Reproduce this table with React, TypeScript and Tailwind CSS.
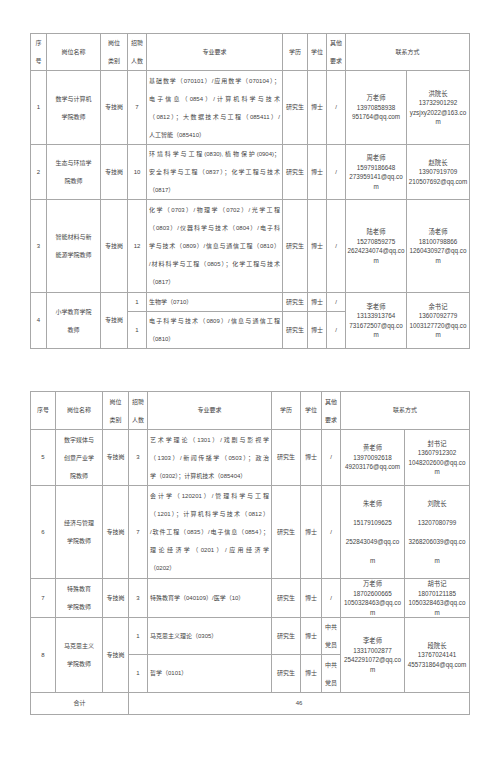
import React from 'react'

const cell = 'border border-[#a8a8a8] p-0 text-center align-middle'
const major = 'border border-[#a8a8a8] px-[2px] py-0 text-left align-middle'

// 多行文本：full 为需要两端对齐的行
function Lines({ lines, full = 0 }: { lines: string[]; full?: number }) {
  return (
    <div className="leading-[18px]">
      {lines.map((l, i) => (
        <div key={i} className={i < full ? 'whitespace-nowrap text-justify [text-align-last:justify]' : 'whitespace-nowrap'}>
          {l}
        </div>
      ))}
    </div>
  )
}

function Contact({ lines, wide }: { lines: string[]; wide?: boolean }) {
  return (
    <div className={wide ? 'leading-[19px] text-[6.3px]' : 'leading-[9.5px] text-[6.3px]'}>
      {lines.map((l, i) => (
        <div key={i} className="whitespace-nowrap">{l}</div>
      ))}
    </div>
  )
}

function Head({ first }: { first: 'two' | 'one' }) {
  return (
    <tr className={first === 'two' ? 'h-[37px]' : 'h-[38px]'}>
      <td className={cell}>{first === 'two' ? <Lines lines={['序', '号']} /> : '序号'}</td>
      <td className={cell}>岗位名称</td>
      <td className={cell}><Lines lines={['岗位', '类别']} /></td>
      <td className={cell}><Lines lines={['招聘', '人数']} /></td>
      <td className={cell}>专业要求</td>
      <td className={cell}>学历</td>
      <td className={cell}>学位</td>
      <td className={cell}><Lines lines={['其他', '要求']} /></td>
      <td className={cell} colSpan={2}>联系方式</td>
    </tr>
  )
}

export default function App() {
  return (
    <div className="min-h-[761px] w-[500px] bg-white pl-[30px] pt-[33px] font-['Liberation_Sans','Noto_Sans_CJK_SC',sans-serif] text-[6px] text-[#444]">
      {/* 第一页 */}
      <table className="w-[439px] table-fixed border-collapse">
        <colgroup>
          <col className="w-[16px]" />
          <col className="w-[54px]" />
          <col className="w-[27px]" />
          <col className="w-[19px]" />
          <col className="w-[136px]" />
          <col className="w-[25px]" />
          <col className="w-[19px]" />
          <col className="w-[19px]" />
          <col className="w-[61px]" />
          <col className="w-[63px]" />
        </colgroup>
        <tbody>
          <Head first="two" />
          <tr className="h-[74px]">
            <td className={cell}>1</td>
            <td className={cell}><Lines lines={['数学与计算机', '学院教师']} /></td>
            <td className={cell}>专技岗</td>
            <td className={cell}>7</td>
            <td className={major}>
              <Lines
                full={3}
                lines={['基础数学（070101）/应用数学（070104）；', '电子信息（0854）/计算机科学与技术', '（0812）；大数据技术与工程（085411）/', '人工智能（085410）']}
              />
            </td>
            <td className={cell}>研究生</td>
            <td className={cell}>博士</td>
            <td className={cell}>/</td>
            <td className={cell}><Contact lines={['万老师', '13970858938', '951764@qq.com']} /></td>
            <td className={cell}><Contact lines={['洪院长', '13732901292', 'yzsjxy2022@163.co', 'm']} /></td>
          </tr>
          <tr className="h-[55px]">
            <td className={cell}>2</td>
            <td className={cell}><Lines lines={['生态与环境学', '院教师']} /></td>
            <td className={cell}>专技岗</td>
            <td className={cell}>10</td>
            <td className={major}>
              <Lines full={2} lines={['环境科学与工程(0830),植物保护(0904)；', '安全科学与工程（0837）；化学工程与技术', '（0817）']} />
            </td>
            <td className={cell}>研究生</td>
            <td className={cell}>博士</td>
            <td className={cell}>/</td>
            <td className={cell}><Contact lines={['周老师', '15979186648', '273959141@qq.co', 'm']} /></td>
            <td className={cell}><Contact lines={['赵院长', '13907919709', '210507692@qq.com']} /></td>
          </tr>
          <tr className="h-[93px]">
            <td className={cell}>3</td>
            <td className={cell}><Lines lines={['智能材料与新', '能源学院教师']} /></td>
            <td className={cell}>专技岗</td>
            <td className={cell}>12</td>
            <td className={major}>
              <Lines
                full={4}
                lines={['化学（0703）/物理学（0702）/光学工程', '（0803）/仪器科学与技术（0804）/电子科', '学与技术（0809）/信息与通信工程（0810）', '/材料科学与工程（0805）；化学工程与技术', '（0817）']}
              />
            </td>
            <td className={cell}>研究生</td>
            <td className={cell}>博士</td>
            <td className={cell}>/</td>
            <td className={cell}><Contact lines={['陆老师', '15270859275', '2624234074@qq.co', 'm']} /></td>
            <td className={cell}><Contact lines={['汤老师', '18100798866', '1260430927@qq.co', 'm']} /></td>
          </tr>
          <tr className="h-[19px]">
            <td className={cell} rowSpan={2}>4</td>
            <td className={cell} rowSpan={2}><Lines lines={['小学教育学院', '教师']} /></td>
            <td className={cell} rowSpan={2}>专技岗</td>
            <td className={cell}>1</td>
            <td className={major}>生物学（0710）</td>
            <td className={cell}>研究生</td>
            <td className={cell}>博士</td>
            <td className={cell}>/</td>
            <td className={cell} rowSpan={2}><Contact lines={['李老师', '13133913764', '731672507@qq.co', 'm']} /></td>
            <td className={cell} rowSpan={2}><Contact lines={['余书记', '13607092779', '1003127720@qq.co', 'm']} /></td>
          </tr>
          <tr className="h-[36px]">
            <td className={cell}>1</td>
            <td className={major}>
              <Lines full={1} lines={['电子科学与技术（0809）/信息与通信工程', '（0810）']} />
            </td>
            <td className={cell}>研究生</td>
            <td className={cell}>博士</td>
            <td className={cell}>/</td>
          </tr>
        </tbody>
      </table>

      {/* 第二页 */}
      <table className="mt-[42px] w-[439px] table-fixed border-collapse">
        <colgroup>
          <col className="w-[25px]" />
          <col className="w-[47px]" />
          <col className="w-[26px]" />
          <col className="w-[19px]" />
          <col className="w-[124px]" />
          <col className="w-[29px]" />
          <col className="w-[21px]" />
          <col className="w-[19px]" />
          <col className="w-[64px]" />
          <col className="w-[65px]" />
        </colgroup>
        <tbody>
          <Head first="one" />
          <tr className="h-[56px]">
            <td className={cell}>5</td>
            <td className={cell}><Lines lines={['数字媒体与', '创意产业学', '院教师']} /></td>
            <td className={cell}>专技岗</td>
            <td className={cell}>3</td>
            <td className={major}>
              <Lines full={2} lines={['艺术学理论（1301）/戏剧与影视学', '（1303）/新闻传播学（0503）；政治', '学（0302）；计算机技术（085404）']} />
            </td>
            <td className={cell}>研究生</td>
            <td className={cell}>博士</td>
            <td className={cell}>/</td>
            <td className={cell}><Contact lines={['黄老师', '13970092618', '49203176@qq.com']} /></td>
            <td className={cell}><Contact lines={['封书记', '13607912302', '1048202600@qq.co', 'm']} /></td>
          </tr>
          <tr className="h-[93px]">
            <td className={cell}>6</td>
            <td className={cell}><Lines lines={['经济与管理', '学院教师']} /></td>
            <td className={cell}>专技岗</td>
            <td className={cell}>7</td>
            <td className={major}>
              <Lines
                full={4}
                lines={['会计学（120201）/管理科学与工程', '（1201）；计算机科学与技术（0812）', '/软件工程（0835）/电子信息（0854）；', '理论经济学（0201）/应用经济学', '（0202）']}
              />
            </td>
            <td className={cell}>研究生</td>
            <td className={cell}>博士</td>
            <td className={cell}>/</td>
            <td className={cell}><Contact wide lines={['朱老师', '15179109625', '252843049@qq.co', 'm']} /></td>
            <td className={cell}><Contact wide lines={['刘院长', '13207080799', '3268206039@qq.co', 'm']} /></td>
          </tr>
          <tr className="h-[38px]">
            <td className={cell}>7</td>
            <td className={cell}><Lines lines={['特殊教育', '学院教师']} /></td>
            <td className={cell}>专技岗</td>
            <td className={cell}>3</td>
            <td className={major}>特殊教育学（040109）/医学（10）</td>
            <td className={cell}>研究生</td>
            <td className={cell}>博士</td>
            <td className={cell}>/</td>
            <td className={cell}><Contact lines={['万老师', '18702600665', '1050328463@qq.co', 'm']} /></td>
            <td className={cell}><Contact lines={['胡书记', '18070121185', '1050328463@qq.co', 'm']} /></td>
          </tr>
          <tr className="h-[37px]">
            <td className={cell} rowSpan={2}>8</td>
            <td className={cell} rowSpan={2}><Lines lines={['马克思主义', '学院教师']} /></td>
            <td className={cell} rowSpan={2}>专技岗</td>
            <td className={cell}>1</td>
            <td className={major}>马克思主义理论（0305）</td>
            <td className={cell}>研究生</td>
            <td className={cell}>博士</td>
            <td className={cell}><Lines lines={['中共', '党员']} /></td>
            <td className={cell} rowSpan={2}><Contact lines={['李老师', '13317002877', '2542291072@qq.co', 'm']} /></td>
            <td className={cell} rowSpan={2}><Contact lines={['段院长', '13767024141', '455731864@qq.com']} /></td>
          </tr>
          <tr className="h-[38px]">
            <td className={cell}>1</td>
            <td className={major}>哲学（0101）</td>
            <td className={cell}>研究生</td>
            <td className={cell}>博士</td>
            <td className={cell}><Lines lines={['中共', '党员']} /></td>
          </tr>
          <tr className="h-[22px]">
            <td className={cell} colSpan={3}>合计</td>
            <td className={cell} colSpan={7}>46</td>
          </tr>
        </tbody>
      </table>
    </div>
  )
}
